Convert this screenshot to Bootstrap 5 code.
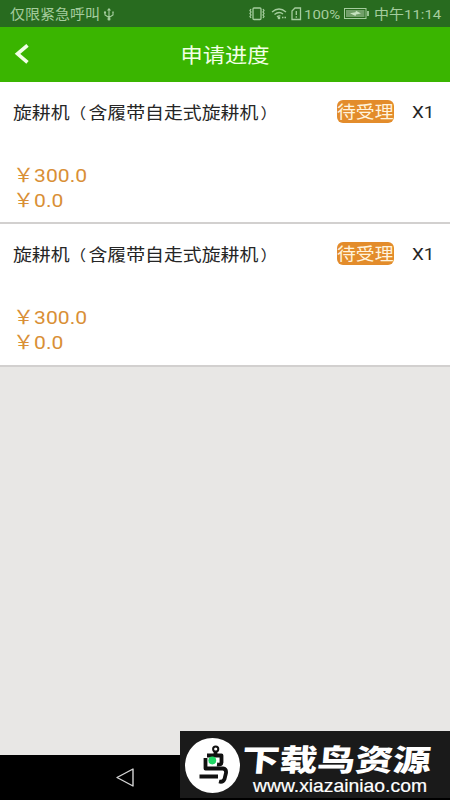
<!DOCTYPE html>
<html lang="zh-CN">
<head>
<meta charset="utf-8">
<meta name="viewport" content="width=device-width, initial-scale=1">
<title>申请进度</title>
<link href="https://cdn.jsdelivr.net/npm/bootstrap@5.3.0/dist/css/bootstrap.min.css" rel="stylesheet">
<style>
  body { font-family: Roboto, "Noto Sans CJK SC", sans-serif; background: #e8e7e5; height: 800px; overflow: hidden; }
  .wide { display: inline-block; white-space: nowrap; transform: scaleX(1.11); transform-origin: left center; }
  .status-bar { height: 27px; background: #286b1f; color: #a5cd9e; font-size: 13.5px; line-height: 28px; }
  .status-left { width: 95px; padding-left: 10px; }
  .status-icons { left: 240px; top: 0; }
  .charge { left: 304px; }
  .clock { left: 374px; }
  .title-bar { height: 55px; background: #3ab500; color: #f1ffe6; }
  .title-bar h1 { font-size: 20px; line-height: 58px; font-weight: 400; transform-origin: center; }
  .back { left: 13px; top: 17px; }
  .order { height: 142px; background: #fff; border-bottom: 2px solid #d2d0cf; color: #262626; font-size: 17px; }
  .order + .order { height: 143px; }
  .order-head { padding: 18px 0 0 12.5px; height: 80.5px; }
  .order-name { width: 324.5px; line-height: 26px; }
  .paren { font-size: 15px; line-height: 1; }
  .paren-open { margin-right: 2px; }
  .paren-close { margin-left: 2px; }
  .state { width: 57px; height: 23px; border-radius: 6px; background: #e38c2b; color: #fff3dc; line-height: 25px; }
  .qty { margin-left: 17.5px; line-height: 25px; }
  .price { color: #d98f36; font-size: 19px; line-height: 25px; padding-left: 12.5px; }
  .nav-keys { height: 45px; background: #000; }
  .watermark { left: 180px; top: 731px; width: 270px; height: 67px; background: #1a1a1a; }
</style>
<script src="https://cdn.jsdelivr.net/npm/bootstrap@5.3.0/dist/js/bootstrap.bundle.min.js"></script>
</head>
<body class="d-flex flex-column position-relative">
  <header>
    <div class="status-bar d-flex position-relative">
      <div class="status-left"><span class="wide">仅限紧急呼叫</span></div>
      <svg class="ms-1 mt-2" width="20" height="14" viewBox="-1.5 0 20 14" fill="none" stroke="#a5cd9e" stroke-width="1.1">
        <path d="M8.500 1V11M4.500 4.500V7L8.500 9.500L12.500 7V4M7 2.500L8.500 .8L10 2.500"/>
        <circle cx="8.500" cy="11" r="1" fill="#a5cd9e"/><circle cx="4.500" cy="4.500" r=".6"/><path d="M11.800 4h1.400"/>
      </svg>
      <svg class="status-icons position-absolute" width="135" height="27" viewBox="0 0 135 27" fill="none" stroke="#a5cd9e" stroke-width="1.3">
        <rect x="13" y="8" width="8" height="11.5" rx="1"/>
        <path d="M11 9l-1 1.500 1 1.500-1 1.500 1 1.500-1 1.500 1 1.500M23 9l1 1.500-1 1.500 1 1.500-1 1.500 1 1.500-1 1.500"/>
        <path d="M32 12Q39 6 46 12M34.500 14.500Q39 10.700 43 14M37 17Q38.500 15.300 40.500 16"/>
        <circle cx="39" cy="18" r=".7" fill="#a5cd9e"/><path d="M42 17.500h1.500M44.500 17.500H46"/>
        <path d="M52 11l3-3h5.500v11.500H52zM56.300 11v4M56.300 16.200v1.500"/>
        <rect x="104.5" y="8.5" width="21.5" height="10" stroke-width="1"/>
        <rect x="106" y="10" width="18.5" height="7" fill="#719f69" stroke="none"/>
        <path d="M128 11v5" stroke-width="1.8"/>
        <path d="M110 13.300l5.500-1 .5-1.500 5 2.600-5 1-.5 1.500z" fill="#c5e2bf" stroke="none"/>
      </svg>
      <span class="wide charge position-absolute">100%</span>
      <span class="wide clock position-absolute">中午11:14</span>
    </div>
    <div class="title-bar position-relative text-center">
      <svg class="back position-absolute" width="18" height="22" viewBox="0 0 18 22" fill="none" stroke="#f1ffe6" stroke-width="3.6"><path d="M14.500 1.300L4.500 9.800L14.500 18.300"/></svg>
      <h1 class="wide m-0">申请进度</h1>
    </div>
  </header>

  <main class="flex-grow-1">
    <section class="order">
      <div class="order-head d-flex align-items-start">
        <div class="order-name"><span class="wide">旋耕机<span class="paren paren-open">（</span>含履带自走式旋耕机<span class="paren paren-close">）</span></span></div>
        <div class="state"><span class="wide">待受理</span></div>
        <div class="qty"><span class="wide">X1</span></div>
      </div>
      <div class="price"><span class="wide">￥300.0</span></div>
      <div class="price"><span class="wide">￥0.0</span></div>
    </section>
    <section class="order">
      <div class="order-head d-flex align-items-start">
        <div class="order-name"><span class="wide">旋耕机<span class="paren paren-open">（</span>含履带自走式旋耕机<span class="paren paren-close">）</span></span></div>
        <div class="state"><span class="wide">待受理</span></div>
        <div class="qty"><span class="wide">X1</span></div>
      </div>
      <div class="price"><span class="wide">￥300.0</span></div>
      <div class="price"><span class="wide">￥0.0</span></div>
    </section>
  </main>

  <footer class="nav-keys">
    <svg width="180" height="45" viewBox="0 0 180 45" fill="none" stroke="#d5d5d5" stroke-width="1.4" stroke-linejoin="round"><path d="M133 14V31L117 22.500Z"/></svg>
  </footer>

  <aside class="watermark position-absolute">
    <svg class="d-block" width="270" height="67" viewBox="0 0 270 67">
      <circle cx="32.5" cy="34.5" r="27.5" fill="#fff"/>
      <g fill="none" stroke="#111" stroke-width="3.8" stroke-linejoin="round">
        <circle cx="35.7" cy="18" r="2.6" stroke-width="2"/>
        <path d="M35.500 20V23M27 24.500H41.500V31.500Q41.500 34 37 33.500"/>
        <path d="M25.500 27V37.500H43Q46.500 38 46 42L44.500 48Q43 51.500 39 50.500M19.500 45.500H38"/>
      </g>
      <circle cx="32.3" cy="29.5" r="3.9" fill="#20d865"/>
      <text transform="translate(61 39.5) skewX(-5) scale(1 .86)" font-family="'Noto Sans CJK SC', sans-serif" font-size="35" font-weight="900" fill="#fff" textLength="189" lengthAdjust="spacingAndGlyphs">下载鸟资源</text>
      <text x="73" y="61" font-family="'Liberation Sans', sans-serif" font-size="18.5" fill="#fff" stroke="#fff" stroke-width=".2" textLength="174" lengthAdjust="spacingAndGlyphs">www.xiazainiao.com</text>
    </svg>
  </aside>
</body>
</html>
